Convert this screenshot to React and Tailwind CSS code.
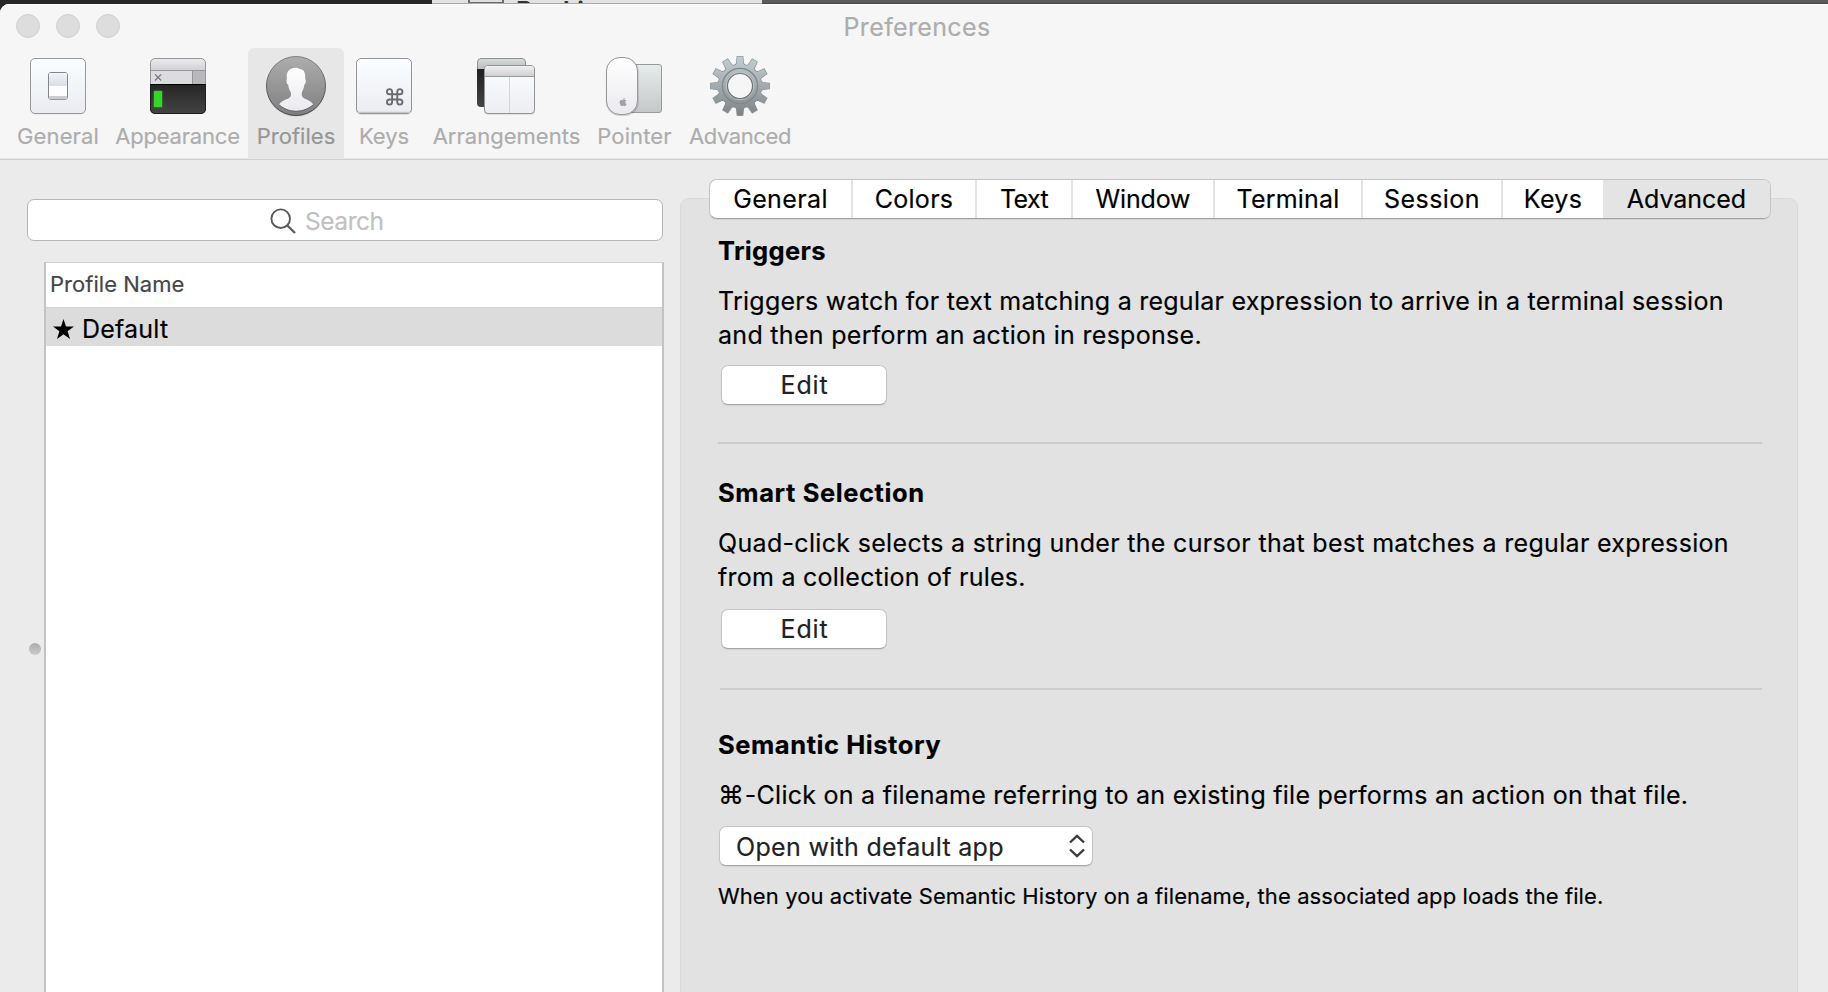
import React from "react";
import { FaApple } from "react-icons/fa";

function Gradient({ id, from, to }) {
  return (
    <linearGradient id={id} x1="0" y1="0" x2="0" y2="1">
      <stop offset="0" stopColor={from} />
      <stop offset="1" stopColor={to} />
    </linearGradient>
  );
}

function Icon({ children }) {
  return (
    <svg className="h-16 w-16 shrink-0" viewBox="0 0 64 64" fill="none">
      {children}
    </svg>
  );
}

function GeneralIcon() {
  return (
    <Icon>
      <defs>
        <Gradient id="gen-plate" from="#f9feff" to="#ebebf1" />
        <Gradient id="gen-top" from="#f1f4f8" to="#d9dee5" />
      </defs>
      <rect x="4.5" y="5" width="55" height="55.3" rx="5" fill="#000" opacity="0.15" />
      <rect x="4.5" y="4.5" width="55" height="55" rx="4.5" fill="url(#gen-plate)" stroke="#98989c" />
      <rect x="22.5" y="18.5" width="19" height="27" rx="2.5" fill="#fdfdfe" stroke="#85858b" />
      <rect x="23" y="19" width="18" height="13" rx="1.5" fill="url(#gen-top)" />
      <rect x="23" y="42" width="18" height="3.2" rx="1" fill="#cbcbcd" />
    </Icon>
  );
}

function AppearanceIcon() {
  return (
    <Icon>
      <defs>
        <Gradient id="app-bar" from="#ececee" to="#cfd1d4" />
        <Gradient id="app-term" from="#252525" to="#444444" />
        <clipPath id="app-clip">
          <rect x="4" y="4" width="56" height="56" rx="5" />
        </clipPath>
        <filter id="app-glow" x="-60%" y="-40%" width="220%" height="180%">
          <feGaussianBlur stdDeviation="1.2" />
        </filter>
      </defs>
      <g clipPath="url(#app-clip)">
        <rect x="4" y="4" width="56" height="13" fill="url(#app-bar)" />
        <rect x="4" y="17" width="42" height="13" fill="#dcdcdf" />
        <rect x="46" y="17" width="14" height="13" fill="#b9b9bc" />
        <path d="M4 16.5H60M46.5 17V30" stroke="#96969a" />
        <rect x="4" y="30" width="56" height="30" fill="url(#app-term)" />
        <path d="M4 30.5H60" stroke="#000" />
      </g>
      <path d="M4.5 30V9a4.5 4.5 0 0 1 4.5-4.5H55a4.5 4.5 0 0 1 4.5 4.5V30" stroke="#97979b" />
      <path d="M4.5 30V55a4.5 4.5 0 0 0 4.5 4.5H55a4.5 4.5 0 0 0 4.5-4.5V30" stroke="#1e1e1e" />
      <path d="M9 20.3l6.2 6.2M15.2 20.3L9 26.5" stroke="#77777b" strokeWidth="1.2" />
      <rect x="8" y="37" width="8" height="16" fill="#38e02c" filter="url(#app-glow)" opacity="0.7" />
      <rect x="8" y="37" width="8" height="16" fill="#38d42c" />
    </Icon>
  );
}

function ProfilesIcon() {
  return (
    <Icon>
      <defs>
        <Gradient id="pro-disc" from="#adadad" to="#7f7f80" />
        <Gradient id="pro-body" from="#ffffff" to="#e9e9ef" />
        <Gradient id="pro-edge" from="#828282" to="#444446" />
      </defs>
      <circle cx="32" cy="32.6" r="30" fill="#000" opacity="0.15" />
      <circle cx="32" cy="32" r="29.5" fill="url(#pro-disc)" stroke="url(#pro-edge)" />
      <path
        d="M31.5 13.8C34.5 13.6 35.5 15.2 37 15.2C40.3 16 41.5 19 41.2 24.5C41.3 25.6 42 25.6 41.8 27.4C41.6 29.4 41 30 40.3 30.8C40 34.5 38.6 36.6 37.9 38.2C37.5 40 37.6 41.4 38.6 43C41 45.8 46.4 45.8 49.3 50.6C44.5 55 38.5 57 32 57C25.5 57 19.8 55 15 50.6C18 45.8 23.8 45.8 26.2 43C27.2 41.4 27.2 40 26.7 38.2C25.8 36.6 24.5 34.5 24.2 30.8C23.3 30 22.7 29.4 22.5 27.4C22.3 25.6 23 25.6 22.9 24.5C21.8 17.5 26 13.8 31.5 13.8Z"
        fill="url(#pro-body)"
      />
      <path d="M15 50.8C25 59.5 39 59.5 49.3 50.8" stroke="#67676a" />
    </Icon>
  );
}

function KeysIcon() {
  return (
    <Icon>
      <defs>
        <Gradient id="key-plate" from="#fafeff" to="#ececf1" />
      </defs>
      <rect x="4" y="5.5" width="56" height="55" rx="5" fill="#000" opacity="0.18" />
      <rect x="4.5" y="4.5" width="55" height="55" rx="4.5" fill="url(#key-plate)" stroke="#949498" />
      <path d="M6 58.3H58" stroke="#c4c4c9" strokeWidth="1.2" />
      <g transform="translate(42.7 42.9) scale(0.86) translate(-12 -12)">
        <path
          d="M15 6v12a3 3 0 1 0 3-3H6a3 3 0 1 0 3 3V6a3 3 0 1 0-3 3h12a3 3 0 1 0-3-3"
          stroke="#6c6c70"
          strokeWidth="2.2"
        />
      </g>
    </Icon>
  );
}

function ArrangementsIcon() {
  return (
    <Icon>
      <defs>
        <Gradient id="arr-back" from="#d9dcdd" to="#b9bcbd" />
        <Gradient id="arr-dark" from="#202020" to="#444444" />
        <Gradient id="arr-head" from="#f0f0f1" to="#d0d0d2" />
        <Gradient id="arr-body" from="#fafeff" to="#ededf2" />
      </defs>
      <path d="M2.5 15.5V8a3.5 3.5 0 0 1 3.5-3.5H47a3.5 3.5 0 0 1 3.5 3.5V15.5Z" fill="url(#arr-back)" stroke="#929294" />
      <path d="M2 15H19V53H6a4 4 0 0 1-4-4Z" fill="url(#arr-dark)" />
      <rect x="9" y="11.5" width="51" height="49" rx="4" fill="#000" opacity="0.16" />
      <rect x="9.5" y="11.5" width="50" height="48" rx="3.5" fill="url(#arr-body)" stroke="#949497" />
      <path d="M10 22V15a3 3 0 0 1 3-3H56a3 3 0 0 1 3 3V22Z" fill="url(#arr-head)" />
      <path d="M10 22.5H59" stroke="#9b9b9e" />
      <path d="M34.5 23V59" stroke="#d2d4d8" />
    </Icon>
  );
}

function PointerIcon() {
  return (
    <Icon>
      <defs>
        <Gradient id="poi-pad" from="#e6ebeb" to="#c6c8c8" />
        <Gradient id="poi-mouse" from="#ffffff" to="#eaeaef" />
      </defs>
      <g transform="translate(-1 0)">
        <rect x="22.5" y="10.5" width="37" height="48" rx="2.5" fill="url(#poi-pad)" stroke="#98999a" />
        <rect x="3.8" y="4" width="33" height="58" rx="14" fill="#000" opacity="0.14" />
        <rect x="4.5" y="3.5" width="31" height="57" rx="13.5" fill="url(#poi-mouse)" stroke="#98989c" />
        <FaApple x="16.3" y="43.2" size={9.5} color="#a2a2a6" />
      </g>
    </Icon>
  );
}

const TEETH = Array.from({ length: 12 }, (_, i) => i * 30);
const TOOTH = "M26.8 12L28.6 9.5L29.3 2.7H34.7L35.4 9.5L37.2 12L36 16H28Z";

function GearIcon() {
  return (
    <Icon>
      <defs>
        <linearGradient id="gear-fill" gradientUnits="userSpaceOnUse" x1="0" y1="2" x2="0" y2="62">
          <stop offset="0" stopColor="#c3ced2" />
          <stop offset="0.55" stopColor="#a0a7aa" />
          <stop offset="1" stopColor="#7e8182" />
        </linearGradient>
        <linearGradient id="gear-edge" gradientUnits="userSpaceOnUse" x1="0" y1="2" x2="0" y2="62">
          <stop offset="0" stopColor="#8e999d" />
          <stop offset="1" stopColor="#545758" />
        </linearGradient>
        <g id="gear-shape">
          <circle cx="32" cy="32" r="21.5" />
          {TEETH.map((a) => (
            <path key={a} d={TOOTH} transform={`rotate(${a} 32 32)`} />
          ))}
        </g>
        <clipPath id="gear-clip">
          <circle cx="32" cy="32" r="21.5" />
          {TEETH.map((a) => (
            <path key={a} d={TOOTH} transform={`rotate(${a} 32 32)`} />
          ))}
        </clipPath>
      </defs>
      <use href="#gear-shape" stroke="url(#gear-edge)" strokeWidth="1.4" />
      <rect width="64" height="64" fill="url(#gear-fill)" clipPath="url(#gear-clip)" />
      <circle cx="32" cy="32" r="17.6" stroke="#7f888b" strokeWidth="1.3" />
      <circle cx="32" cy="32" r="13.8" stroke="#bcc3c5" strokeWidth="0.9" />
      <circle cx="32" cy="32" r="12.5" fill="#f6f6f6" stroke="#6f7577" strokeWidth="1.2" />
    </Icon>
  );
}

const toolbar = [
  { label: "General", icon: GeneralIcon, box: "w-[98px]", text: "tracking-[0.13px] text-[#adadad]" },
  { label: "Appearance", icon: AppearanceIcon, box: "w-[141px]", text: "tracking-[-0.19px] text-[#adadad]" },
  { label: "Profiles", icon: ProfilesIcon, box: "w-24 rounded-t-md bg-[#e7e7e7]", text: "tracking-[0.03px] text-[#969696]" },
  { label: "Keys", icon: KeysIcon, box: "w-20", text: "tracking-[-0.05px] text-[#adadad]" },
  { label: "Arrangements", icon: ArrangementsIcon, box: "w-[165px]", text: "tracking-[0.015px] text-[#adadad]" },
  { label: "Pointer", icon: PointerIcon, box: "w-[91px]", text: "tracking-[0.12px] text-[#adadad]" },
  { label: "Advanced", icon: GearIcon, box: "w-[120px]", text: "tracking-[-0.39px] text-[#adadad]" },
];

const tabs = [
  { label: "General", cls: "w-[143px] border-r-2 tracking-[0.38px]" },
  { label: "Colors", cls: "w-[124px] border-r-2 tracking-[0.3px]" },
  { label: "Text", cls: "w-[96px] border-r-2 tracking-[-0.6px]" },
  { label: "Window", cls: "w-[142px] border-r-2 tracking-[-0.16px]" },
  { label: "Terminal", cls: "w-[148px] border-r-2 tracking-[0.2px]" },
  { label: "Session", cls: "w-[140px] border-r-2 tracking-[0.45px]" },
  { label: "Keys", cls: "w-[100px] tracking-[0.35px]" },
  { label: "Advanced", cls: "grow rounded-r-md bg-[#e4e4e4] tracking-[-0.04px]" },
];

function EditButton({ className }) {
  return (
    <button
      className={
        "ml-[3px] block h-10 w-[166px] rounded-[7px] border border-[#c4c4c4] border-b-[#a6a6a6] bg-white pl-px text-center text-[25px] leading-[38px] tracking-[0.8px] text-[#222] shadow-[0_1px_1px_rgba(0,0,0,0.08)] " +
        className
      }
    >
      Edit
    </button>
  );
}

function Heading({ children, className }) {
  return <h2 className={"text-[25.5px] font-bold leading-[30px] whitespace-nowrap " + className}>{children}</h2>;
}

export default function App() {
  return (
    <div className="flex h-[992px] w-[1828px] flex-col overflow-hidden bg-[#282828] font-['Inter','Liberation_Sans',sans-serif] text-black [-webkit-text-stroke:0.18px_currentColor]">
      <div className="flex h-1 shrink-0 overflow-hidden">
        <div className="w-[432px] bg-[#272727]" />
        <div className="flex w-[330px] items-start overflow-hidden border-b border-[#a9a9a9] bg-[#e2e2e2]">
          <div className="ml-9 h-[3px] w-9 shrink-0 border-x-2 border-b border-[#6c6c6f] bg-[#dedede]" />
          <div className="ml-[12px] h-1 overflow-hidden text-[25px] font-semibold leading-[22px] text-[#333]">Booking</div>
        </div>
        <div className="grow border-b border-[#474747] bg-[#5b5b5b]" />
      </div>

      <div className="flex min-h-0 grow flex-col overflow-hidden rounded-tl-[9px] bg-[#ebebeb]">
        <header className="shrink-0 border-b border-[#cecece] bg-[#f6f6f6] shadow-[inset_0_1px_0_#ffffff]">
          <div className="grid h-11 grid-cols-[1fr_auto_1fr] items-start">
            <div className="flex gap-4 pt-2.5 pl-4">
              <span className="h-6 w-6 rounded-full border border-[#d0d0d0] bg-[#dddddd]" />
              <span className="h-6 w-6 rounded-full border border-[#d0d0d0] bg-[#dddddd]" />
              <span className="h-6 w-6 rounded-full border border-[#d0d0d0] bg-[#dddddd]" />
            </div>
            <h1 className="pt-2 pl-[6px] text-[25px] leading-[30px] tracking-[0.35px] text-[#adadad]">Preferences</h1>
            <span />
          </div>
          <nav className="flex h-[110px] pl-[9px]">
            {toolbar.map(({ label, icon: Glyph, box, text }) => (
              <button key={label} className={"flex flex-col items-center pt-1.5 " + box}>
                <Glyph />
                <span className={"mt-1 text-[22px] leading-7 whitespace-nowrap " + text}>{label}</span>
              </button>
            ))}
          </nav>
          <div className="h-px bg-[#e9e9e9]" />
        </header>

        <main className="flex min-h-0 grow">
          <aside className="flex w-[680px] shrink-0 flex-col pt-[39px] pl-[27px]">
            <div className="flex h-[42px] w-[636px] shrink-0 items-center rounded-[7px] border border-[#b6b6b6] bg-white pt-0.5 pl-[242px]">
              <svg className="h-[26px] w-[26px] shrink-0" viewBox="0 0 26 26" fill="none" stroke="#5a5a5a">
                <circle cx="10.7" cy="10.7" r="9.3" strokeWidth="1.9" />
                <path d="M17.3 17.5L25 25" strokeWidth="2.3" />
              </svg>
              <span className="ml-[9px] text-[24.5px] leading-10 tracking-[-0.45px] text-[#c1c1c1]">Search</span>
            </div>
            <div className="mt-[21px] flex min-h-0 grow">
              <div className="w-[17px] shrink-0 pt-[381px] pl-[2px]">
                <div className="h-3 w-3 rounded-full bg-linear-to-b from-[#acacac] to-[#cbcbcb]" />
              </div>
              <div className="w-[620px] border-x-2 border-t border-x-[#c3c3c3] border-t-[#cfcfcf] bg-white">
                <div className="h-[45px] border-b border-[#d2d2d2] pl-1 text-[22px] leading-[43px] tracking-[0.03px] text-[#464646]">
                  Profile Name
                </div>
                <div className="flex h-[38px] items-center bg-[#dcdcdc] pt-[3px] pl-[7px]">
                  <svg className="h-5 w-[21px]" viewBox="0 0 21 20">
                    <path d="M10.5 0L13 7.6H21L14.6 12.3L17 20L10.5 15.3L4 20L6.4 12.3L0 7.6H8Z" />
                  </svg>
                  <span className="ml-2 text-[25px] leading-[38px] tracking-[0.21px]">Default</span>
                </div>
              </div>
            </div>
          </aside>

          <section className="flex w-[1118px] flex-col pt-[19px]">
            <div className="relative z-10 -mb-[21px] ml-[29px] flex h-10 w-[1062px] shrink-0 rounded-[8px] border border-[#c4c4c4] border-b-[#a0a0a0] bg-white shadow-[0_1px_1px_rgba(0,0,0,0.07)]">
              {tabs.map(({ label, cls }) => (
                <button key={label} className={"shrink-0 border-[#e4e4e4] text-center text-[25px] leading-[38px] " + cls}>
                  {label}
                </button>
              ))}
            </div>
            <div className="min-h-0 grow rounded-t-[9px] border border-b-0 border-[#d9d9d9] bg-[#e2e2e2] pt-[37px] pl-[37px]">
              <Heading className="tracking-[0.35px]">Triggers</Heading>
              <p className="mt-[18px] text-[25px] leading-[34px] whitespace-nowrap">
                <span className="block tracking-[0.251px]">Triggers watch for text matching a regular expression to arrive in a terminal session</span>
                <span className="block tracking-[0.3px]">and then perform an action in response.</span>
              </p>
              <EditButton className="mt-[13px]" />
              <hr className="mt-[37px] h-0.5 w-[1044px] border-0 bg-[#cccccc]" />

              <Heading className="mt-[34px] tracking-[0.6px]">Smart Selection</Heading>
              <p className="mt-[18px] text-[25px] leading-[34px] whitespace-nowrap">
                <span className="block tracking-[0.321px]">Quad-click selects a string under the cursor that best matches a regular expression</span>
                <span className="block tracking-[0.25px]">from a collection of rules.</span>
              </p>
              <EditButton className="mt-[15px]" />
              <hr className="mt-[39px] ml-0.5 h-0.5 w-[1042px] border-0 bg-[#cccccc]" />

              <Heading className="mt-10 tracking-[0.56px]">Semantic History</Heading>
              <p className="mt-[18px] text-[25px] leading-[34px] tracking-[0.259px] whitespace-nowrap">
                <span className="mr-[0.5px] text-[26px]">⌘</span>-Click on a filename referring to an existing file performs an action on that file.
              </p>
              <button className="mt-3.5 ml-px flex h-10 w-[374px] items-center justify-between rounded-[7px] border border-[#c4c4c4] border-b-[#a6a6a6] bg-white pr-[7px] pl-4 text-[25px] leading-[38px] tracking-[0.318px] text-[#222] shadow-[0_1px_1px_rgba(0,0,0,0.08)]">
                <span className="pt-0.5">Open with default app</span>
                <svg className="h-6 w-4" viewBox="0 0 16 24" fill="none" stroke="#3c3c3c" strokeWidth="2.4">
                  <path d="M1 8.5L8 1.8L15 8.5M1 15.5L8 22.2L15 15.5" />
                </svg>
              </button>
              <p className="mt-[15px] text-[22px] leading-[30px] tracking-[0.09px] whitespace-nowrap">
                When you activate Semantic History on a filename, the associated app loads the file.
              </p>
            </div>
          </section>
        </main>
      </div>
    </div>
  );
}
